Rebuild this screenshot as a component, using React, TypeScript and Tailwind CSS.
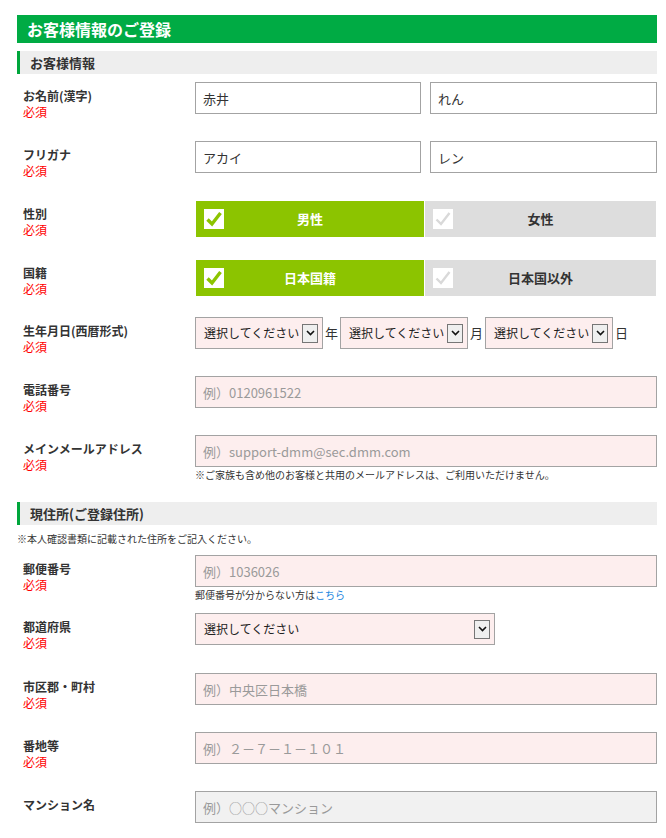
import React from 'react';

const Label: React.FC<{ text: string; required?: boolean }> = ({ text, required = true }) => (
  <div className="w-[178px] shrink-0 pl-[6px] pt-[6px] text-[12px] leading-[16px]">
    <div className="font-bold text-[#333]">{text}</div>
    {required && <div className="text-[#ff0000]">必須</div>}
  </div>
);

const TextBox: React.FC<{ placeholder?: string; value?: string; width: string; tone?: 'pink' | 'white' | 'gray' }> = ({
  placeholder,
  value,
  width,
  tone = 'pink',
}) => {
  const bg = tone === 'white' ? 'bg-white' : tone === 'gray' ? 'bg-[#f1f1f1]' : 'bg-[#fdeeee]';
  return (
    <input
      readOnly
      defaultValue={value}
      placeholder={placeholder}
      className={`${width} ${bg} h-[32px] border border-[#a3a3a3] px-[7px] text-[13px] text-[#333] placeholder:text-[#9a9a9a] outline-none`}
    />
  );
};

const ArrowBox: React.FC = () => (
  <span className="flex h-[19px] w-[16px] shrink-0 items-center justify-center border border-[#767676] bg-[#efefef]">
    <svg width="9" height="6" viewBox="0 0 9 6">
      <path d="M1 1 L4.5 4.5 L8 1" fill="none" stroke="#111" strokeWidth="1.6" />
    </svg>
  </span>
);

const SelectBox: React.FC<{ width: string }> = ({ width }) => (
  <div
    className={`${width} flex h-[32px] items-center justify-between border border-[#a3a3a3] bg-[#fdeeee] pl-[8px] pr-[4px] text-[12px] text-[#222]`}
  >
    <span className="whitespace-nowrap">選択してください</span>
    <ArrowBox />
  </div>
);

const Check: React.FC<{ on: boolean }> = ({ on }) => (
  <svg width="20" height="20" viewBox="0 0 20 20" className="block">
    <rect width="20" height="20" fill="#fff" />
    <path
      d="M3.5 10.5 L8 15 L16.5 4"
      fill="none"
      stroke={on ? '#8cc400' : '#d9d9d9'}
      strokeWidth={on ? 3.4 : 2.4}
    />
  </svg>
);

const Toggle: React.FC<{ left: string; right: string }> = ({ left, right }) => (
  <div className="mt-[1px] flex h-[36px] gap-[1px] pl-[1px] text-[13px] font-bold">
    <div className="grid w-[228px] grid-cols-[28px_1fr_28px] items-center bg-[#8cc400] text-white">
      <div className="pl-[8px]">
        <Check on />
      </div>
      <div className="text-center">{left}</div>
      <div />
    </div>
    <div className="grid w-[231px] grid-cols-[28px_1fr_28px] items-center bg-[#dddddd] text-[#333]">
      <div className="pl-[8px]">
        <Check on={false} />
      </div>
      <div className="text-center">{right}</div>
      <div />
    </div>
  </div>
);

const SectionHead: React.FC<{ title: string }> = ({ title }) => (
  <div className="flex h-[23px] items-center border-l-[3px] border-[#00a63c] bg-[#eeeeee] pl-[10px] text-[13px] font-bold text-[#333]">
    {title}
  </div>
);

export default function App() {
  return (
    <div className="min-h-screen bg-white px-[17px] pt-[15px] font-['Noto_Sans_CJK_JP','Noto_Sans',sans-serif] text-[#333]">
      <div className="w-[640px]">
        <div className="flex h-[28px] items-center bg-[#00ab44] pl-[10px] text-[16px] font-bold text-white">
          お客様情報のご登録
        </div>

        <div className="mt-[8px]">
          <SectionHead title="お客様情報" />

          <div className="flex h-[59px] pt-[8px]">
            <Label text="お名前(漢字)" />
            <div className="flex gap-[9px]">
              <TextBox value="赤井" width="w-[226px]" tone="white" />
              <TextBox value="れん" width="w-[227px]" tone="white" />
            </div>
          </div>

          <div className="flex h-[59px] pt-[8px]">
            <Label text="フリガナ" />
            <div className="flex gap-[9px]">
              <TextBox value="アカイ" width="w-[226px]" tone="white" />
              <TextBox value="レン" width="w-[227px]" tone="white" />
            </div>
          </div>

          <div className="flex h-[59px] pt-[8px]">
            <Label text="性別" />
            <Toggle left="男性" right="女性" />
          </div>

          <div className="flex h-[59px] pt-[8px]">
            <Label text="国籍" />
            <Toggle left="日本国籍" right="日本国以外" />
          </div>

          <div className="flex h-[59px] pt-[7px]">
            <Label text="生年月日(西暦形式)" />
            <div className="flex items-start text-[13px] leading-[32px]">
              <SelectBox width="w-[128px]" />
              <span className="mx-[2px]">年</span>
              <SelectBox width="w-[128px]" />
              <span className="mx-[2px]">月</span>
              <SelectBox width="w-[128px]" />
              <span className="mx-[2px]">日</span>
            </div>
          </div>

          <div className="flex h-[59px] pt-[7px]">
            <Label text="電話番号" />
            <TextBox placeholder="例）0120961522" width="w-[462px]" />
          </div>

          <div className="flex h-[74px] pt-[7px]">
            <Label text="メインメールアドレス" />
            <div>
              <TextBox placeholder="例）support-dmm@sec.dmm.com" width="w-[462px]" />
              <div className="mt-[1px] text-[10px] leading-[13px] text-[#333]">
                ※ご家族も含め他のお客様と共用のメールアドレスは、ご利用いただけません。
              </div>
            </div>
          </div>
        </div>

        <div>
          <SectionHead title="現住所(ご登録住所)" />
          <div className="pt-[6px] text-[10px] leading-[16px] text-[#333]">※本人確認書類に記載された住所をご記入ください。</div>

          <div className="flex h-[59px] pt-[8px]">
            <Label text="郵便番号" />
            <div>
              <TextBox placeholder="例）1036026" width="w-[462px]" />
              <div className="mt-[1px] text-[10px] leading-[13px] text-[#333]">
                郵便番号が分からない方は<span className="text-[#1a85e0]">こちら</span>
              </div>
            </div>
          </div>

          <div className="flex h-[59px] pt-[7px]">
            <Label text="都道府県" />
            <SelectBox width="w-[300px]" />
          </div>

          <div className="flex h-[59px] pt-[8px]">
            <Label text="市区郡・町村" />
            <TextBox placeholder="例）中央区日本橋" width="w-[462px]" />
          </div>

          <div className="flex h-[59px] pt-[8px]">
            <Label text="番地等" />
            <TextBox placeholder="例）２－７－１－１０１" width="w-[462px]" />
          </div>

          <div className="flex h-[59px] pt-[8px]">
            <Label text="マンション名" required={false} />
            <TextBox placeholder="例）○○○マンション" width="w-[462px]" tone="gray" />
          </div>
        </div>
      </div>
    </div>
  );
}
